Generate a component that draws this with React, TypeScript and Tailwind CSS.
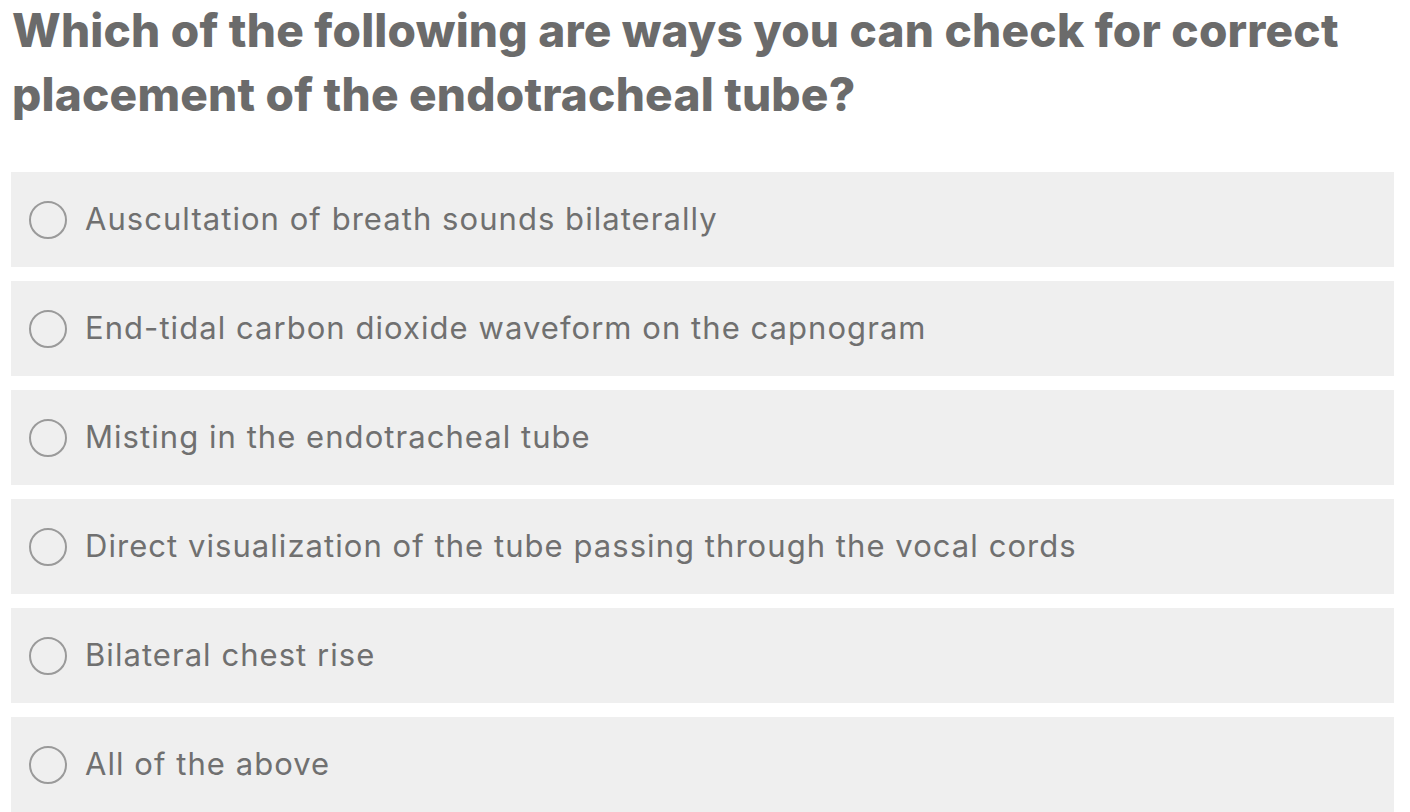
import React from "react";

const options = [
  "Auscultation of breath sounds bilaterally",
  "End-tidal carbon dioxide waveform on the capnogram",
  "Misting in the endotracheal tube",
  "Direct visualization of the tube passing through the vocal cords",
  "Bilateral chest rise",
  "All of the above",
];

export default function App() {
  return (
    <div className="w-[1410px] h-[812px] overflow-hidden bg-white" style={{ fontFamily: "Inter, 'Noto Sans', sans-serif" }}>
      <h1 className="pl-[12px] -mt-[2px] text-[46px] leading-[64px] font-extrabold text-[#6b6b6b] tracking-[0.2px]">
        Which of the following are ways you can check for correct placement of the endotracheal tube?
      </h1>
      <div className="mt-[46px] ml-[11px] w-[1383px] flex flex-col gap-[14px]">
        {options.map((o) => (
          <div key={o} className="h-[95px] bg-[#efefef] flex items-center pl-[18px]">
            <span className="w-[38px] h-[38px] rounded-full border-[2.5px] border-[#9a9a9a] shrink-0" />
            <span className="ml-[18px] text-[31px] text-[#707070] font-normal tracking-[1.05px]">{o}</span>
          </div>
        ))}
      </div>
    </div>
  );
}
